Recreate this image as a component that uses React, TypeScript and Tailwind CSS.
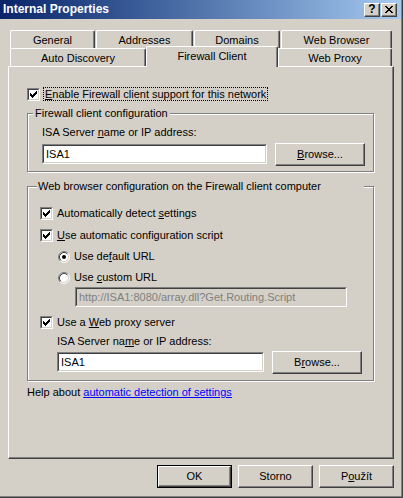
import React from 'react';
import clsx from 'clsx';

function CheckBox() {
  return (
    <span className="block w-[13px] h-[13px] shrink-0 border border-t-[#808080] border-l-[#808080] border-b-white border-r-white">
      <span className="flex w-full h-full items-center justify-center bg-white border border-t-[#404040] border-l-[#404040] border-b-[#D4D0C8] border-r-[#D4D0C8]">
        <svg width="7" height="7" viewBox="0 0 7 7" shapeRendering="crispEdges">
          <path
            fill="#000"
            d="M6 0h1v1h-1z M5 1h2v1h-2z M0 2h1v1h-1z M4 2h3v1h-3z M0 3h2v1h-2z M3 3h3v1h-3z M0 4h5v1h-5z M1 5h3v1h-3z M2 6h1v1h-1z"
          />
        </svg>
      </span>
    </span>
  );
}

function Radio({ on }: { on?: boolean }) {
  return (
    <svg width="12" height="12" viewBox="0 0 12 12" className="shrink-0">
      <circle cx="6" cy="6" r="4.5" fill="#fff" />
      <path d="M2.11 9.89 A5.5 5.5 0 0 1 9.89 2.11" stroke="#808080" fill="none" />
      <path d="M9.89 2.11 A5.5 5.5 0 0 1 2.11 9.89" stroke="#fff" fill="none" />
      <path d="M2.82 9.18 A4.5 4.5 0 0 1 9.18 2.82" stroke="#404040" fill="none" />
      <path d="M9.18 2.82 A4.5 4.5 0 0 1 2.82 9.18" stroke="#D4D0C8" fill="none" />
      {on && <circle cx="6" cy="6" r="2" fill="#000" />}
    </svg>
  );
}

function Button({ children, className, def }: { children: React.ReactNode; className?: string; def?: boolean }) {
  const inner = (
    <div className="flex-1 flex items-center justify-center border border-t-white border-l-white border-r-[#404040] border-b-[#404040] shadow-[inset_-1px_-1px_#808080] bg-[#D4D0C8]">
      {children}
    </div>
  );
  return <div className={clsx('flex shrink-0', def && 'border border-black', className)}>{inner}</div>;
}

function TextBox({ value, disabled, className }: { value: string; disabled?: boolean; className?: string }) {
  return (
    <div className={clsx('h-[20px] shrink-0 border border-t-[#808080] border-l-[#808080] border-b-white border-r-white', className)}>
      <div
        className={clsx(
          'h-full flex items-center pl-[2px] border border-t-[#404040] border-l-[#404040] border-b-[#D4D0C8] border-r-[#D4D0C8] whitespace-nowrap overflow-hidden',
          disabled ? 'bg-[#D4D0C8] text-[#808080]' : 'bg-white'
        )}
      >
        {value}
      </div>
    </div>
  );
}

function Tab({ children, className, selected }: { children: React.ReactNode; className?: string; selected?: boolean }) {
  return (
    <div
      className={clsx(
        'flex items-center justify-center shrink-0 bg-[#D4D0C8] border-l border-t border-r border-l-white border-t-white border-r-[#404040] rounded-t-[2px] shadow-[inset_-1px_0_#808080] whitespace-nowrap',
        selected ? 'h-[21px] -mb-[1px] relative z-10 pb-[1px]' : 'h-[18px] pt-[2px]',
        className
      )}
    >
      {children}
    </div>
  );
}

function TitleButton({ children }: { children: React.ReactNode }) {
  return (
    <div className="w-[16px] h-[14px] flex border border-t-white border-l-white border-r-[#404040] border-b-[#404040] shadow-[inset_-1px_-1px_#808080] bg-[#D4D0C8]">
      <div className="flex-1 flex items-center justify-center">{children}</div>
    </div>
  );
}

export default function App() {
  return (
    <div className="w-[403px] h-[498px] bg-[#D4D0C8] border-r border-b border-[#404040] shadow-[inset_-1px_-1px_#808080] font-['Liberation_Sans',Arial,sans-serif] text-[11px] leading-[13px] text-black flex flex-col overflow-hidden select-none">
      {/* title bar */}
      <div className="h-[19px] mr-[1px] bg-linear-to-r from-[#0A246A] to-[#A6CAF0] flex items-center pl-[3px] pr-[4px] shrink-0">
        <span className="text-white font-bold text-[12px]">Internal Properties</span>
        <div className="ml-auto flex gap-[1px]">
          <TitleButton>
            <span className="font-bold text-[12px] leading-[12px] -mt-[1px]">?</span>
          </TitleButton>
          <TitleButton>
            <svg width="8" height="7" viewBox="0 0 8 7" shapeRendering="crispEdges">
              <path
                fill="#000"
                d="M0 0h2v1h-2z M6 0h2v1h-2z M1 1h2v1h-2z M5 1h2v1h-2z M2 2h4v1h-4z M3 3h2v1h-2z M2 4h4v1h-4z M1 5h2v1h-2z M5 5h2v1h-2z M0 6h2v1h-2z M6 6h2v1h-2z"
              />
            </svg>
          </TitleButton>
        </div>
      </div>

      {/* tabs */}
      <div className="mt-[11px] pl-[10px] flex flex-col">
        <div className="flex gap-[1px] h-[18px]">
          <Tab className="w-[85px]">General</Tab>
          <Tab className="w-[97px]">Addresses</Tab>
          <Tab className="w-[86px]">Domains</Tab>
          <Tab className="w-[111px]">Web Browser</Tab>
        </div>
        <div className="flex h-[18px] items-end">
          <Tab className="w-[136px]">Auto Discovery</Tab>
          <Tab selected className="w-[132px]">
            Firewall Client
          </Tab>
          <Tab className="w-[114px]">Web Proxy</Tab>
        </div>
      </div>

      {/* panel */}
      <div className="ml-[8px] w-[386px] h-[393px] shrink-0 border border-l-white border-t-white border-r-[#404040] border-b-[#404040] shadow-[inset_-1px_-1px_#808080] flex flex-col items-start pl-[18px]">
        <div className="mt-[20px] h-[14px] flex items-center gap-[3px]">
          <CheckBox />
          <span className="border border-dotted border-black px-[1px] leading-[12px]">
            <u>E</u>nable Firewall client support for this network
          </span>
        </div>

        <fieldset className="mt-[6px] w-[347px] border border-[#808080] shadow-[inset_1px_1px_white,1px_1px_white]">
          <legend className="ml-[5px] px-[2px] leading-[13px] bg-[#D4D0C8]">Firewall client configuration</legend>
          <div className="pl-[14px] pt-[6px] pb-[5px]">
            <div>
              ISA Server <u>n</u>ame or IP address:
            </div>
            <div className="mt-[4px] flex items-start gap-[8px]">
              <TextBox value="ISA1" className="w-[225px] mt-[1px]" />
              <Button className="w-[90px] h-[23px]">
                <span>
                  <u>B</u>rowse...
                </span>
              </Button>
            </div>
          </div>
        </fieldset>

        <fieldset className="mt-[8px] w-[347px] border border-[#808080] shadow-[inset_1px_1px_white,1px_1px_white]">
          <legend className="ml-[9px] w-[327px] pl-[1px] leading-[13px] bg-[#D4D0C8]">
            Web browser configuration on the Firewall client computer
          </legend>
          <div className="pl-[12px] pb-[6px] flex flex-col items-start">
            <div className="mt-[13px] h-[15px] flex items-center gap-[4px]">
              <CheckBox />
              <span>
                Automatically detect <u>s</u>ettings
              </span>
            </div>
            <div className="mt-[7px] h-[15px] flex items-center gap-[4px]">
              <CheckBox />
              <span>
                <u>U</u>se automatic configuration script
              </span>
            </div>
            <div className="mt-[6px] ml-[18px] h-[15px] flex items-center gap-[4px]">
              <Radio on />
              <span>
                Use de<u>f</u>ault URL
              </span>
            </div>
            <div className="mt-[6px] ml-[18px] h-[15px] flex items-center gap-[4px]">
              <Radio />
              <span>
                Use <u>c</u>ustom URL
              </span>
            </div>
            <TextBox value="http://ISA1:8080/array.dll?Get.Routing.Script" disabled className="mt-[2px] ml-[35px] w-[272px]" />
            <div className="mt-[8px] h-[15px] flex items-center gap-[4px]">
              <CheckBox />
              <span>
                Use a <u>W</u>eb proxy server
              </span>
            </div>
            <div className="mt-[5px] ml-[17px]">
              ISA Server na<u>m</u>e or IP address:
            </div>
            <div className="mt-[3px] ml-[17px] flex items-start gap-[8px]">
              <TextBox value="ISA1" className="w-[207px] mt-[1px]" />
              <Button className="w-[90px] h-[23px]">
                <span>
                  B<u>r</u>owse...
                </span>
              </Button>
            </div>
          </div>
        </fieldset>

        <div className="mt-[5px]">
          Help about <span className="text-[#0000FF] underline">automatic detection of settings</span>
        </div>
      </div>

      {/* dialog buttons */}
      <div className="mt-[6px] pr-[8px] flex justify-end gap-[6px]">
        <Button def className="w-[75px] h-[23px]">
          OK
        </Button>
        <Button className="w-[75px] h-[23px]">Storno</Button>
        <Button className="w-[75px] h-[23px]">
          <span>
            P<u>o</u>užít
          </span>
        </Button>
      </div>
    </div>
  );
}
